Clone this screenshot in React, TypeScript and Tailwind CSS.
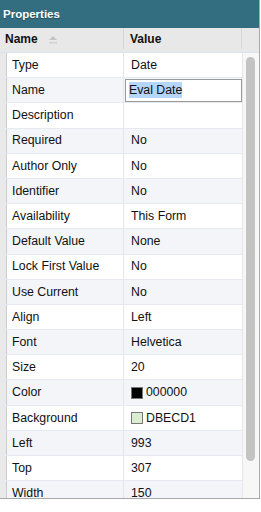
const rows: { name: string; value: string; swatch?: string; edit?: boolean }[] = [
  { name: 'Type', value: 'Date' },
  { name: 'Name', value: 'Eval Date', edit: true },
  { name: 'Description', value: '' },
  { name: 'Required', value: 'No' },
  { name: 'Author Only', value: 'No' },
  { name: 'Identifier', value: 'No' },
  { name: 'Availability', value: 'This Form' },
  { name: 'Default Value', value: 'None' },
  { name: 'Lock First Value', value: 'No' },
  { name: 'Use Current', value: 'No' },
  { name: 'Align', value: 'Left' },
  { name: 'Font', value: 'Helvetica' },
  { name: 'Size', value: '20' },
  { name: 'Color', value: '000000', swatch: '#000000' },
  { name: 'Background', value: 'DBECD1', swatch: '#dbecd1' },
  { name: 'Left', value: '993' },
  { name: 'Top', value: '307' },
  { name: 'Width', value: '150' },
];

export default function App() {
  return (
    <div className="h-[512px] w-[261px] bg-white font-['Liberation_Sans',Arial,sans-serif] text-[#111]">
      <div className="flex h-[499px] w-[260px] flex-col overflow-hidden border-r border-b border-[#a9a9a9]">
        <div className="flex h-[28px] shrink-0 items-center bg-[#336e80] px-[3px] pt-[1px]">
          <span className="text-[11.5px] font-bold text-white [text-shadow:0_1px_1px_rgba(0,0,0,0.35)]">
            Properties
          </span>
        </div>

        <div className="flex h-[25px] shrink-0 border-b border-[#dde3ea] bg-[#e8e8e8] pb-[3px] text-[12px] font-bold">
          <div className="flex w-[124px] items-center border-r border-[#d8d8d8] pl-[5px]">
            Name
            <svg width="10" height="10" viewBox="0 0 10 10" className="ml-[10px] mt-[2px]">
              <path d="M1 5 L5 1 L9 5 Z" fill="#c4c4c4" />
              <rect x="1" y="7" width="8" height="1.5" fill="#d2d2d2" />
            </svg>
          </div>
          <div className="flex w-[118px] items-center border-r border-[#d8d8d8] pl-[6px]">Value</div>
          <div className="flex-1" />
        </div>

        <div className="flex min-h-0 flex-1">
          <div className="w-[242px] overflow-hidden">
            {rows.map((r, i) => (
              <div
                key={r.name}
                className={
                  (i % 2 === 0 ? 'bg-white ' : 'bg-[#f3f5f8] ') +
                  'flex h-[25.2px] border-b border-[#e6eaf0] text-[12.3px]'
                }
              >
                <div className="flex w-[124px] shrink-0 items-center border-r border-[#e6e6e6]">
                  <div className="h-full w-[7px] border-r border-[#cdcdcd] bg-[#e9e9e9]" />
                  <span className="pl-[5px]">{r.name}</span>
                </div>
                <div className="flex flex-1 items-center">
                  {r.edit ? (
                    <div className="ml-[1px] flex h-[23px] w-[117px] items-center border border-[#9a9a9a] bg-white pl-[3px]">
                      <span className="bg-[#b5d5fb] leading-[16px]">{r.value}</span>
                    </div>
                  ) : (
                    <div className="flex items-center pl-[7px]">
                      {r.swatch && (
                        <span
                          className="mr-[3px] inline-block h-[12px] w-[12px] border border-[#777]"
                          style={{ backgroundColor: r.swatch }}
                        />
                      )}
                      {r.value}
                    </div>
                  )}
                </div>
              </div>
            ))}
          </div>
          <div className="flex-1 border-l border-[#e6e6e6] bg-[#f7f7f7] pt-[4px]">
            <div className="ml-[3px] h-[404px] w-[9px] rounded-full bg-[#c3c3c3]" />
          </div>
        </div>
      </div>
    </div>
  );
}
